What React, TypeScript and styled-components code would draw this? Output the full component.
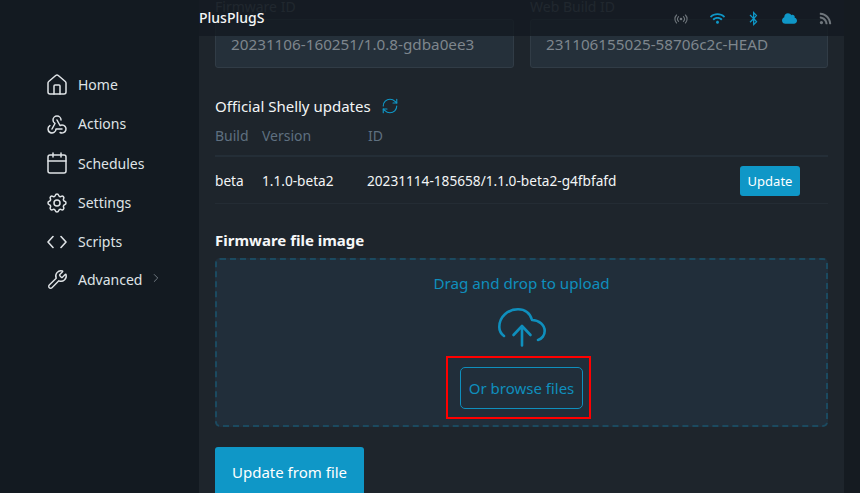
import React from "react";
import styled, { createGlobalStyle } from "styled-components";
import { House, Calendar, Wrench, RefreshCw, ChevronRight } from "lucide-react";
import { TbSettings, TbWebhook } from "react-icons/tb";
import { FaWifi, FaBluetoothB, FaCloud, FaRss } from "react-icons/fa";

const Global = createGlobalStyle`
  html, body { margin: 0; height: 100%; background: #131a21; overflow: hidden; }
  #root { height: 100%; }
  * { box-sizing: border-box; }
  body { font-family: "Noto Sans", "Open Sans", sans-serif; color: #fff; }
`;

const Page = styled.div`
  position: relative;
  display: flex;
  width: 860px;
  height: 493px;
  overflow: hidden;
`;
const Sidebar = styled.nav`
  width: 199px;
  flex: none;
  background: #131a21;
  padding: 65px 0 0 45px;
  display: flex;
  flex-direction: column;
`;
const NavItem = styled.div`
  display: flex;
  align-items: center;
  height: 39.3px;
  gap: 9px;
  font-size: 14px;
  color: #dfe3e6;
  &:last-child { margin-top: -1.5px; }
`;
const NavIcon = styled.span`
  display: flex;
  width: 24px;
  height: 24px;
  align-items: center;
  justify-content: center;
  flex: none;
`;
const Chevron = styled.span`
  display: flex;
  margin-left: -2px;
  margin-top: -3px;
  color: #7c858d;
`;
const Main = styled.main`
  width: 645px;
  flex: none;
  background: #1e252c;
  padding: 0 16px;
  height: 493px;
  overflow: hidden;
`;
const Gutter = styled.div`
  flex: 1;
  background: #151b21;
`;
const Header = styled.header`
  position: absolute;
  top: 0;
  left: 199px;
  width: 645px;
  height: 36px;
  background: rgba(19, 26, 33, 0.82);
  display: flex;
  align-items: center;
  padding-right: 10px;
`;
const Brand = styled.div`
  font-size: 14px;
  font-weight: 500;
  color: #f4f6f7;
  flex: 1;
  line-height: 36px;
`;
const HeadIcons = styled.div`
  display: flex;
  align-items: center;
  gap: 18px;
  margin-top: 1px;
`;
const HeadIcon = styled.span<{ $on?: boolean }>`
  display: flex;
  width: 18px;
  justify-content: center;
  color: ${(p) => (p.$on ? "#0f97c7" : "#6f767c")};
`;
const Fields = styled.div`
  display: grid;
  grid-template-columns: 299px 298px;
  gap: 16px;
`;
const Label = styled.div`
  font-size: 14px;
  line-height: 13px;
  color: #5b646c;
  margin-bottom: 6px;
`;
const ReadOnly = styled.div`
  height: 49px;
  background: #25303a;
  border: 1px solid #313c46;
  border-radius: 3px;
  padding: 8px 15px 0;
  font-size: 15.25px;
  line-height: 32px;
  color: #7e868d;
`;
const SectionTitle = styled.div`
  display: flex;
  align-items: center;
  gap: 10px;
  margin-top: 26px;
  font-size: 15px;
  line-height: 24px;
  color: #f3f5f6;
  svg { color: #0f97c7; }
`;
const Table = styled.div`
  margin-top: 5px;
`;
const Cols = styled.div`
  display: grid;
  grid-template-columns: 47px 106px 372px 1fr;
  align-items: center;
`;
const HeadRow = styled(Cols)`
  height: 34px;
  padding-bottom: 8px;
  font-size: 14px;
  color: #5f7080;
  border-bottom: 2px solid #242e37;
`;
const BodyRow = styled(Cols)`
  height: 47px;
  font-size: 13.65px;
  color: #f3f5f6;
  border-bottom: 1px solid #242c34;
`;
const BodyId = styled.span`
  margin-left: -1px;
`;
const SmallButton = styled.button`
  display: block;
  width: 60px;
  height: 30px;
  border: 0;
  border-radius: 3px;
  background: #0f97c7;
  color: #fff;
  font: 13px "Noto Sans", sans-serif;
  padding: 0;
  margin-top: 1px;
`;
const FileTitle = styled.div`
  margin-top: 25px;
  font-size: 15px;
  line-height: 22px;
  font-weight: 700;
  color: #f6f7f8;
`;
const Drop = styled.div`
  margin-top: 7px;
  height: 169px;
  background: #212e3a;
  border: 2px dashed #1b4a60;
  border-radius: 5px;
  display: flex;
  flex-direction: column;
  align-items: center;
  padding-top: 11px;
  color: #0f8fbd;
`;
const DropText = styled.div`
  font-size: 15.2px;
  line-height: 24px;
`;
const DropIcon = styled.div`
  display: flex;
  margin-top: 13px;
`;
const BrowseWrap = styled.div`
  position: relative;
  margin-top: 19px;
`;
const Browse = styled.div`
  width: 123px;
  height: 42px;
  border: 1px solid #0f8fbd;
  border-radius: 5px;
  font-size: 15px;
  line-height: 40px;
  text-align: center;
`;
const Highlight = styled.div`
  position: absolute;
  left: -14px;
  top: -11px;
  width: 145px;
  height: 63px;
  border: 2px solid #f00;
`;
const UploadButton = styled.button`
  display: block;
  margin-top: 20px;
  width: 149px;
  height: 50px;
  border: 0;
  border-radius: 3px;
  background: #0f97c7;
  color: #fff;
  font: 15px "Noto Sans", sans-serif;
  padding: 0;
`;

export default function App() {
  return (
    <Page>
      <Global />
      <Sidebar>
        <NavItem><NavIcon><House size={24} strokeWidth={1.5} /></NavIcon>Home</NavItem>
        <NavItem><NavIcon><TbWebhook size={24} strokeWidth={1.5} /></NavIcon>Actions</NavItem>
        <NavItem><NavIcon><Calendar size={24} strokeWidth={1.5} /></NavIcon>Schedules</NavItem>
        <NavItem><NavIcon><TbSettings size={24} strokeWidth={1.5} /></NavIcon>Settings</NavItem>
        <NavItem>
          <NavIcon>
            <svg width="20" height="14" viewBox="0 0 20 14" fill="none" stroke="currentColor" strokeWidth="1.6" strokeLinecap="round" strokeLinejoin="round">
              <path d="M6 1.5 1 7l5 5.5" />
              <path d="m14 1.5 5 5.5-5 5.5" />
            </svg>
          </NavIcon>
          Scripts
        </NavItem>
        <NavItem>
          <NavIcon><Wrench size={21} strokeWidth={1.6} /></NavIcon>Advanced
          <Chevron><ChevronRight size={14} strokeWidth={1.5} /></Chevron>
        </NavItem>
      </Sidebar>
      <Main>
        <Fields>
          <div>
            <Label>Firmware ID</Label>
            <ReadOnly>20231106-160251/1.0.8-gdba0ee3</ReadOnly>
          </div>
          <div>
            <Label>Web Build ID</Label>
            <ReadOnly>231106155025-58706c2c-HEAD</ReadOnly>
          </div>
        </Fields>
        <SectionTitle>Official Shelly updates <RefreshCw size={18} strokeWidth={1.5} /></SectionTitle>
        <Table>
          <HeadRow><span>Build</span><span>Version</span><span>ID</span><span /></HeadRow>
          <BodyRow>
            <span>beta</span>
            <span>1.1.0-beta2</span>
            <BodyId>20231114-185658/1.1.0-beta2-g4fbfafd</BodyId>
            <span><SmallButton>Update</SmallButton></span>
          </BodyRow>
        </Table>
        <FileTitle>Firmware file image</FileTitle>
        <Drop>
          <DropText>Drag and drop to upload</DropText>
          <DropIcon>
            <svg width="48" height="40" viewBox="0 0 48 40" fill="none" stroke="currentColor" strokeWidth="2.6" strokeLinecap="round" strokeLinejoin="round">
              <path d="M6 28C2.5 25.5 1.3 22.5 1.3 19 1.3 8.5 10 1.3 20 1.3c7 0 12 4 14 10.7 7 0 12.7 5 12.7 11 0 4-2.7 8-6.7 9" />
              <path d="M24 37.5V18M15.5 27l8.5-9 8.5 9" />
            </svg>
          </DropIcon>
          <BrowseWrap>
            <Browse>Or browse files</Browse>
            <Highlight />
          </BrowseWrap>
        </Drop>
        <UploadButton>Update from file</UploadButton>
      </Main>
      <Gutter />
      <Header>
        <Brand>PlusPlugS</Brand>
        <HeadIcons>
          <HeadIcon>
            <svg width="14" height="10" viewBox="0 0 14 10" fill="none" stroke="currentColor" strokeWidth="1.1" strokeLinecap="round">
              <circle cx="7" cy="5" r="1.3" fill="currentColor" stroke="none" />
              <path d="M4.6 2.6a3.4 3.4 0 0 0 0 4.8M9.4 2.6a3.4 3.4 0 0 1 0 4.8" />
              <path d="M2.6 1a5.6 5.6 0 0 0 0 8M11.4 1a5.6 5.6 0 0 1 0 8" />
            </svg>
          </HeadIcon>
          <HeadIcon $on><FaWifi size={15} /></HeadIcon>
          <HeadIcon $on><FaBluetoothB size={15} /></HeadIcon>
          <HeadIcon $on><FaCloud size={15} /></HeadIcon>
          <HeadIcon><FaRss size={13} /></HeadIcon>
        </HeadIcons>
      </Header>
    </Page>
  );
}
